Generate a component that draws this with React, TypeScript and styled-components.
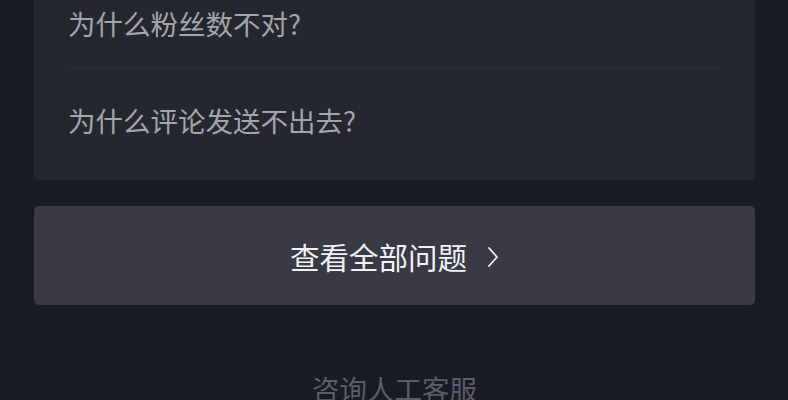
import styled, { createGlobalStyle } from 'styled-components';

const GlobalStyle = createGlobalStyle`
  html, body {
    margin: 0;
    padding: 0;
    background: #181a24;
    overflow: hidden;
  }
  body {
    font-family: "Noto Sans CJK SC", "Noto Sans", sans-serif;
  }
`;

const Page = styled.div`
  width: 788px;
  height: 400px;
  padding: 0 33px 0 34px;
  box-sizing: border-box;
  display: flex;
  flex-direction: column;
  overflow: hidden;
  background: #181a24;
  & > * {
    flex-shrink: 0;
  }
`;

const Card = styled.div`
  margin-top: -29px;
  padding-bottom: 16px;
  background: #25272f;
  border-radius: 5px;
  display: flex;
  flex-direction: column;
`;

const Question = styled.div`
  margin: 0 35px 0 34px;
  padding: 32px 0 24px;
  font-size: 27.5px;
  line-height: 40px;
  color: #a4a5ac;
  & + & {
    border-top: 1px solid #2f313a;
  }
`;

const AllButton = styled.button`
  margin-top: 26px;
  height: 99px;
  border: none;
  border-radius: 5px;
  background: #393a45;
  color: #f2f2f4;
  font-family: inherit;
  font-size: 29.5px;
  display: flex;
  align-items: center;
  justify-content: center;
  gap: 20px;
  padding: 0;
  cursor: pointer;
`;

const Chevron = styled.svg`
  width: 12px;
  height: 22px;
  margin-top: 2px;
`;

const Service = styled.div`
  margin-top: 63px;
  text-align: center;
  font-size: 27.5px;
  line-height: 40px;
  color: #5b5d67;
`;

const questions = ['为什么粉丝数不对?', '为什么评论发送不出去?'];

export default function App() {
  return (
    <>
      <GlobalStyle />
      <Page>
        <Card>
          {questions.map((q) => (
            <Question key={q}>{q}</Question>
          ))}
        </Card>
        <AllButton>
          查看全部问题
          <Chevron viewBox="0 0 12 22">
            <path
              d="M2 2 L10 11 L2 20"
              fill="none"
              stroke="#f2f2f4"
              strokeWidth="1.8"
              strokeLinecap="round"
              strokeLinejoin="round"
            />
          </Chevron>
        </AllButton>
        <Service>咨询人工客服</Service>
      </Page>
    </>
  );
}
